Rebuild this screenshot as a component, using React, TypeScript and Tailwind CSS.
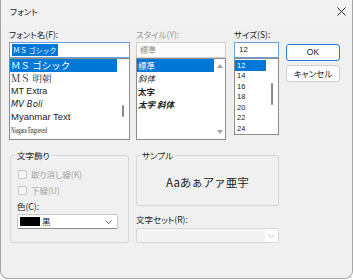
import React from "react";

const fonts = [
  { label: "ＭＳ ゴシック", cls: "font-['Noto_Sans_CJK_JP',sans-serif] text-[9.5px] [font-feature-settings:normal]", sel: true },
  { label: "ＭＳ 明朝", cls: "font-['Noto_Serif_CJK_JP','Noto_Sans_CJK_JP',serif] text-[9.5px] [font-feature-settings:normal]" },
  { label: "MT Extra", cls: "font-['Liberation_Sans',sans-serif] text-[9px]" },
  { label: "MV Boli", cls: "font-['DejaVu_Sans',sans-serif] text-[8.5px] italic" },
  { label: "Myanmar Text", cls: "font-['Liberation_Sans',sans-serif] text-[9.5px]" },
  { label: "Niagara Engraved", cls: "font-['Liberation_Serif',serif] text-[8px] inline-block origin-left scale-x-[0.62]" },
];

const styles = [
  { label: "標準", cls: "", sel: true },
  { label: "斜体", cls: "italic" },
  { label: "太字", cls: "font-bold" },
  { label: "太字 斜体", cls: "font-bold italic" },
];

const sizes = ["12", "14", "16", "18", "20", "22", "24"];

function Chevron({ color }: { color: string }) {
  return (
    <svg width="7" height="4" viewBox="0 0 7 4">
      <path d="M0.5 0.5 3.5 3.5 6.5 0.5" fill="none" stroke={color} strokeWidth="0.9" />
    </svg>
  );
}

function Arrow({ up }: { up?: boolean }) {
  return (
    <svg width="6" height="4" viewBox="0 0 6 4">
      <path d={up ? "M0 4 3 0 6 4Z" : "M0 0 6 0 3 4Z"} fill="#a3a3a3" />
    </svg>
  );
}

function Check({ label }: { label: string }) {
  return (
    <div className="h-[14px] flex items-center gap-[4px] pl-[1px]">
      <div className="w-[9px] h-[9px] rounded-[2px] border border-[#c8c8c8] bg-[#f6f6f6]" />
      <span className="text-[8.5px] leading-none text-[#a2a2a2]">{label}</span>
    </div>
  );
}

export default function App() {
  return (
    <div className="w-[353px] h-[280px] bg-white">
      <div className="w-[353px] h-[279px] bg-[#f0f0f0] border-x border-b border-[#a6a6a6] rounded-b-[8px] flex flex-col text-[#1b1b1b] font-['Noto_Sans_CJK_JP',sans-serif] [font-feature-settings:'palt']">
        {/* Title bar */}
        <div className="h-[25px] shrink-0 flex items-center justify-between pl-[9px] pr-[6px] pb-[2px] bg-[#f2f2f2]">
          <span className="text-[8.5px]">フォント</span>
          <svg width="9" height="9" viewBox="0 0 9 9">
            <path d="M0.5 0.5 8.5 8.5 M8.5 0.5 0.5 8.5" stroke="#2a2a2a" strokeWidth="1" />
          </svg>
        </div>

        <div className="flex-1 px-[8px] flex flex-col">
          {/* Top row */}
          <div className="flex items-start">
            {/* Font name */}
            <div className="w-[121px] flex flex-col">
              <div className="mt-[2px] h-[14px] leading-[14px] text-[8.5px]">フォント名(F):</div>
              <div className="mt-[1px] h-[16px] bg-white border border-[#6b9fd6] flex items-center pl-[2px]">
                <span className="bg-[#0078d7] text-white text-[7px] leading-[12px] px-[1px] [font-feature-settings:normal]">ＭＳ ゴシック</span>
              </div>
              <div className="h-[82px] bg-white border border-[#8c8c8c] flex overflow-hidden">
                <div className="flex-1 flex flex-col">
                  {fonts.map((f) => (
                    <div
                      key={f.label}
                      className={`h-[13px] shrink-0 flex items-center pl-[1px] whitespace-nowrap ${f.sel ? "bg-[#0078d7] text-white" : ""}`}
                    >
                      <span className={f.cls}>{f.label}</span>
                    </div>
                  ))}
                </div>
                <div className="w-[12px] flex justify-center">
                  <div className="mt-[46px] w-[2px] h-[12px] rounded-full bg-[#8a8a8a]" />
                </div>
              </div>
            </div>

            {/* Style */}
            <div className="ml-[6px] w-[90px] flex flex-col">
              <div className="mt-[2px] h-[14px] leading-[14px] text-[8.5px] text-[#9a9a9a]">スタイル(Y):</div>
              <div className="mt-[1px] h-[16px] bg-[#fbfbfb] border border-[#cfcfcf] flex items-center pl-[3px]">
                <span className="text-[8px] text-[#8a8a8a]">標準</span>
              </div>
              <div className="h-[82px] bg-white border border-[#8c8c8c] flex overflow-hidden">
                <div className="flex-1 flex flex-col">
                  {styles.map((s) => (
                    <div
                      key={s.label}
                      className={`h-[13px] shrink-0 flex items-center pl-[1px] text-[8.5px] whitespace-nowrap ${s.cls} ${s.sel ? "bg-[#0078d7] text-white" : ""}`}
                    >
                      {s.label}
                    </div>
                  ))}
                </div>
                <div className="w-[11px] flex flex-col items-center justify-between pt-[5px] pb-[5px]">
                  <Arrow up />
                  <Arrow />
                </div>
              </div>
            </div>

            {/* Size */}
            <div className="ml-[8px] w-[45px] flex flex-col">
              <div className="mt-[2px] h-[14px] leading-[14px] text-[8.5px]">サイズ(S):</div>
              <div className="mt-[1px] h-[16px] bg-white border border-[#6b9fd6] flex items-center pl-[4px]">
                <span className="text-[8px] font-['Liberation_Sans',sans-serif]">12</span>
              </div>
              <div className="h-[77px] bg-white border border-[#8c8c8c] flex overflow-hidden">
                <div className="flex-1 flex flex-col pt-[1px]">
                  {sizes.map((s, i) => (
                    <div
                      key={s}
                      className={`h-[10.5px] shrink-0 flex items-center pl-[2px] text-[7.5px] font-['Liberation_Sans',sans-serif] ${i === 0 ? "bg-[#0078d7] text-white" : ""}`}
                    >
                      {s}
                    </div>
                  ))}
                </div>
                <div className="w-[12px] flex justify-center">
                  <div className="mt-[24px] w-[2px] h-[22px] rounded-full bg-[#8a8a8a]" />
                </div>
              </div>
            </div>

            {/* Buttons */}
            <div className="ml-[7px] w-[54px] flex flex-col">
              <button className="mt-[19px] h-[17px] rounded-[3px] bg-[#fdfdfd] border border-[#2a78cc] text-[8.5px] font-['Liberation_Sans',sans-serif] flex items-center justify-center">
                OK
              </button>
              <button className="mt-[4px] h-[17px] rounded-[3px] bg-[#fdfdfd] border border-[#d0d0d0] text-[8.5px] flex items-center justify-center">
                キャンセル
              </button>
            </div>
          </div>

          {/* Bottom row */}
          <div className="mt-[9px] flex items-start">
            <fieldset className="ml-[1px] w-[119px] h-[94px] border border-[#d6d6d6] rounded-[3px]">
              <legend className="ml-[4px] px-[2px] text-[8.5px] leading-[12px]">文字飾り</legend>
              <div className="flex flex-col pl-[6px]">
                <div className="mt-[6px]">
                  <Check label="取り消し線(K)" />
                </div>
                <div className="mt-[2px]">
                  <Check label="下線(U)" />
                </div>
                <div className="mt-[3px] h-[12px] leading-[12px] text-[8.5px]">色(C):</div>
                <div className="mt-[2px] w-[101px] h-[15px] bg-white border border-[#c9c9c9] border-b-[#8a8a8a] rounded-[2px] flex items-center pl-[2px] pr-[5px]">
                  <div className="w-[20px] h-[9px] bg-black" />
                  <span className="ml-[2px] text-[8.5px] flex-1">黒</span>
                  <Chevron color="#5f5f5f" />
                </div>
              </div>
            </fieldset>

            <div className="ml-[7px] w-[143px] flex flex-col">
              <fieldset className="h-[57px] border border-[#d6d6d6] rounded-[3px]">
                <legend className="ml-[3px] px-[2px] text-[8.5px] leading-[12px]">サンプル</legend>
                <div className="h-[44px] flex items-center justify-center text-[11.5px] [font-feature-settings:normal]">
                  Aaあぁアァ亜宇
                </div>
              </fieldset>
              <div className="mt-[7px] h-[12px] leading-[12px] text-[8.5px]">文字セット(R):</div>
              <div className="mt-[3px] h-[15px] bg-[#f3f3f3] border border-[#d8d8d8] rounded-[2px] flex justify-end">
                <div className="w-[13px] bg-white flex items-center justify-center">
                  <Chevron color="#c2c2c2" />
                </div>
              </div>
            </div>
          </div>
        </div>
      </div>
    </div>
  );
}
